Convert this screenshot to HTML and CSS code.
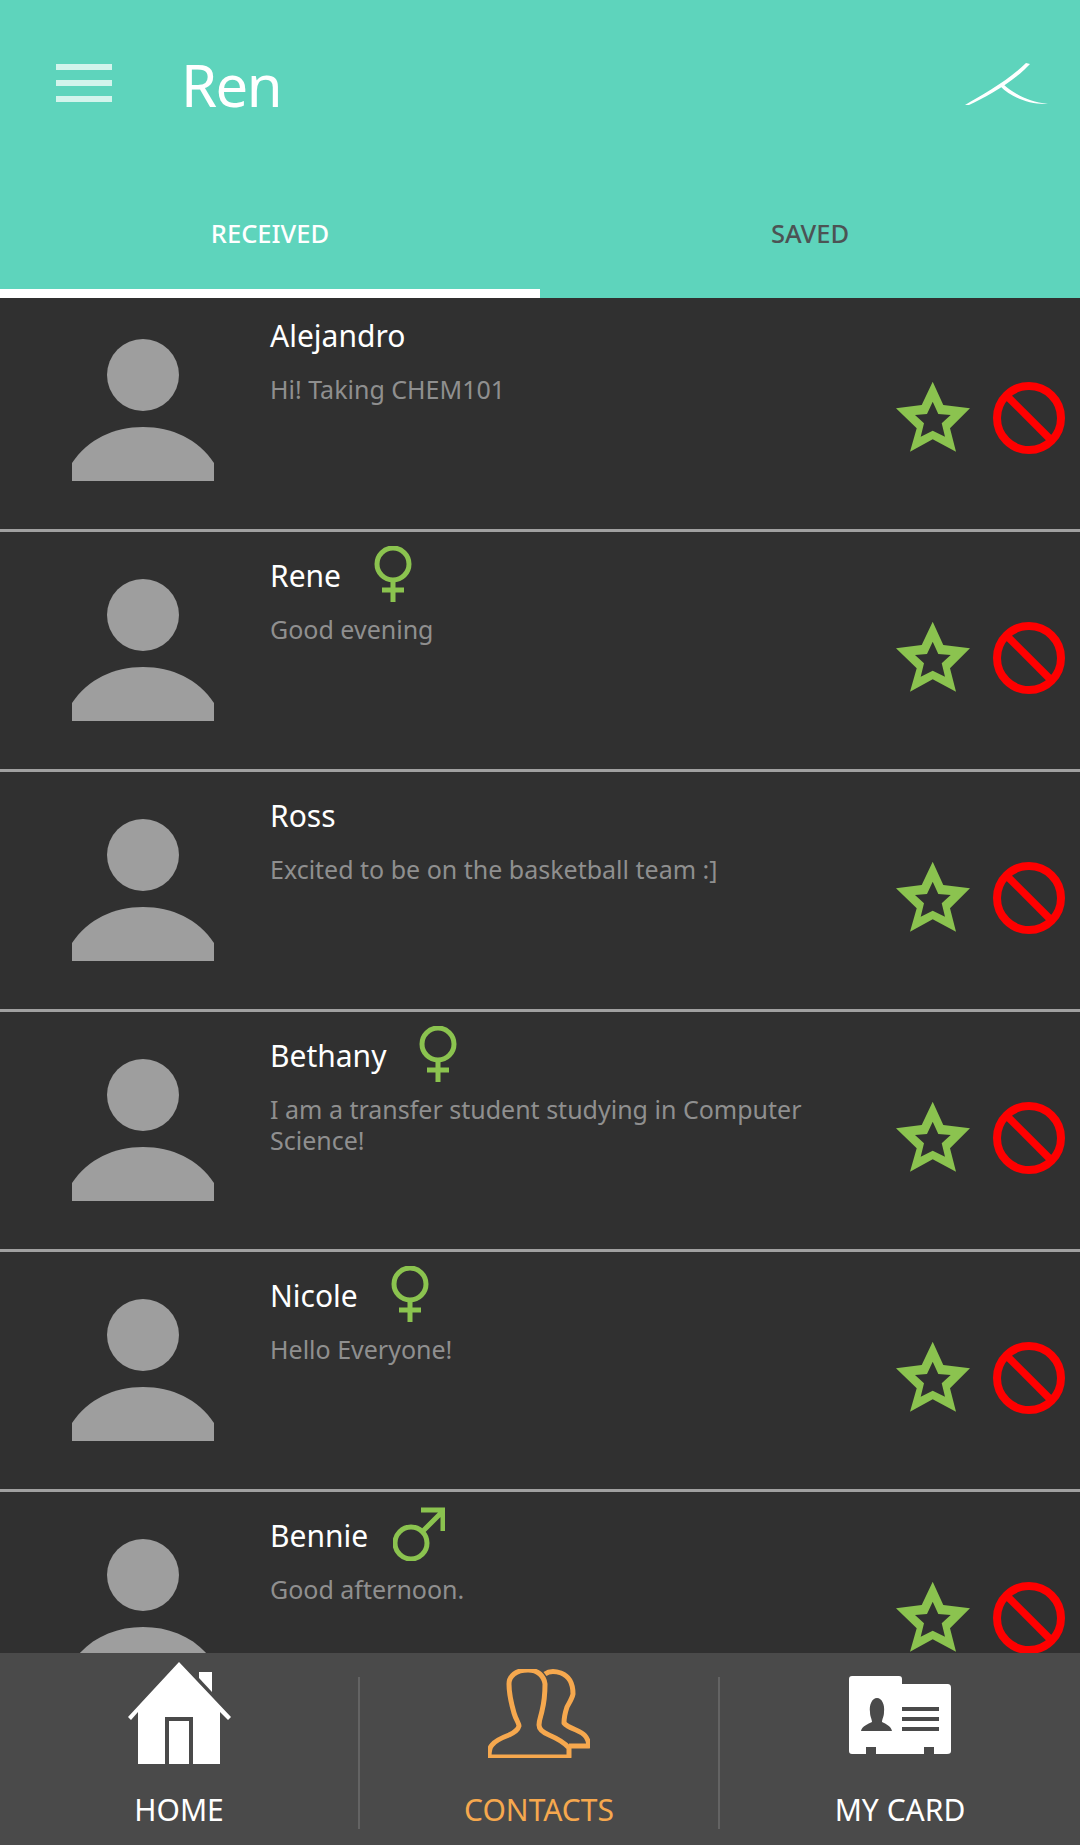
FILE: index.html
```html
<!DOCTYPE html>
<html lang="en">
<head>
    <meta charset="UTF-8">
    <meta name="viewport" content="width=device-width, initial-scale=1.0">
    <title>Ren</title>
    <link rel="stylesheet" href="styles.css">
</head>
<body>
    <svg class="defs" width="0" height="0">
        <symbol id="avatar" viewBox="0 0 142 142">
            <circle cx="71" cy="36" r="36"/>
            <path d="M0 142V124C16 100 42 88 71 88S126 100 142 124V142Z"/>
        </symbol>
        <symbol id="star" viewBox="0 0 76 72">
            <path fill-rule="evenodd" fill="#8bc34f" d="M37.700 0.700 48.300 24 75 27.300 55 47.300 61 70.700 37.700 58.300 15 70.700 21.700 47.300 1 27.300 26.700 24ZM37.700 20.700 32 33 20 34 29 42.300 25.700 55.700 37.700 49.700 50 55.700 46.700 42.300 55.700 34 43.300 33Z"/>
        </symbol>
        <symbol id="block" viewBox="0 0 74 74">
            <circle cx="37" cy="37" r="32" fill="none" stroke="#ff0000" stroke-width="8"/>
            <path d="M14 14 60 60" stroke="#ff0000" stroke-width="7.500"/>
        </symbol>
        <symbol id="female" viewBox="0 0 40 56">
            <circle cx="20" cy="18" r="16" fill="none" stroke="#8bc34f" stroke-width="5"/>
            <path d="M20 34V56M9 44H31" fill="none" stroke="#8bc34f" stroke-width="5"/>
        </symbol>
        <symbol id="male" viewBox="0 0 52 54">
            <circle cx="18" cy="36" r="16" fill="none" stroke="#8bc34f" stroke-width="5"/>
            <path d="M29 25 49 5M28 3H50V24" fill="none" stroke="#8bc34f" stroke-width="5"/>
        </symbol>
    </svg>

    <header class="top">
        <div class="toolbar">
            <div class="menu-btn"><span></span><span></span><span></span></div>
            <h1 class="title">Ren</h1>
            <svg class="brand" width="84" height="44" viewBox="0 0 84 44">
                <path d="M1 43C20 32 45 18 62 1L66 2 60 8C45 22 20 36 5 43Z" fill="#fff"/>
                <path d="M39 22C50 32 65 40 84 42 66 43 48 36 36 24Z" fill="#fff"/>
            </svg>
        </div>
        <div class="tabs">
            <div class="tab active">RECEIVED</div>
            <div class="tab">SAVED</div>
        </div>
    </header>

    <main class="contact-list">
        <div class="contact">
            <svg class="avatar"><use href="#avatar"/></svg>
            <div class="info">
                <div class="name-row"><span class="name">Alejandro</span></div>
                <p class="message">Hi! Taking CHEM101</p>
            </div>
            <div class="actions">
                <svg class="star"><use href="#star"/></svg>
                <svg class="block"><use href="#block"/></svg>
            </div>
        </div>
        <div class="contact">
            <svg class="avatar"><use href="#avatar"/></svg>
            <div class="info">
                <div class="name-row"><span class="name">Rene</span><svg class="female"><use href="#female"/></svg></div>
                <p class="message">Good evening</p>
            </div>
            <div class="actions">
                <svg class="star"><use href="#star"/></svg>
                <svg class="block"><use href="#block"/></svg>
            </div>
        </div>
        <div class="contact">
            <svg class="avatar"><use href="#avatar"/></svg>
            <div class="info">
                <div class="name-row"><span class="name">Ross</span></div>
                <p class="message">Excited to be on the basketball team :]</p>
            </div>
            <div class="actions">
                <svg class="star"><use href="#star"/></svg>
                <svg class="block"><use href="#block"/></svg>
            </div>
        </div>
        <div class="contact">
            <svg class="avatar"><use href="#avatar"/></svg>
            <div class="info">
                <div class="name-row"><span class="name">Bethany</span><svg class="female"><use href="#female"/></svg></div>
                <p class="message">I am a transfer student studying in Computer Science!</p>
            </div>
            <div class="actions">
                <svg class="star"><use href="#star"/></svg>
                <svg class="block"><use href="#block"/></svg>
            </div>
        </div>
        <div class="contact">
            <svg class="avatar"><use href="#avatar"/></svg>
            <div class="info">
                <div class="name-row"><span class="name">Nicole</span><svg class="female"><use href="#female"/></svg></div>
                <p class="message">Hello Everyone!</p>
            </div>
            <div class="actions">
                <svg class="star"><use href="#star"/></svg>
                <svg class="block"><use href="#block"/></svg>
            </div>
        </div>
        <div class="contact">
            <svg class="avatar"><use href="#avatar"/></svg>
            <div class="info">
                <div class="name-row"><span class="name">Bennie</span><svg class="male"><use href="#male"/></svg></div>
                <p class="message">Good afternoon.</p>
            </div>
            <div class="actions">
                <svg class="star"><use href="#star"/></svg>
                <svg class="block"><use href="#block"/></svg>
            </div>
        </div>
    </main>

    <nav class="bottom-nav">
        <div class="nav-item">
            <div class="nav-icon">
                <svg width="103" height="103" viewBox="0 0 103 103">
                    <path d="M71 10H84V30L71 16Z" fill="#fff"/>
                    <path d="M51 0 103 55 100 58 92 50V102H10V50L3 58 0 55Z" fill="#fff"/>
                    <path d="M39 102V57H63V102" fill="none" stroke="#4a4a4a" stroke-width="4"/>
                </svg>
            </div>
            <span class="nav-label">HOME</span>
        </div>
        <div class="nav-item current">
            <div class="nav-icon">
                <svg width="102" height="89" viewBox="0 0 102 89">
                    <g fill="none" stroke="#f6a84e" stroke-width="5" stroke-linejoin="round" transform="translate(1 1)">
                        <path d="M39 0C27 0 20 6 20 14 20 24 23 36 25 43 27 50 30 53 30 56 29 60 26 62 20 65 12 68 6 71 3 75 0 78 0 82 0 87H80V78C75 72 67 68 60 65 53 62 50 59 50 55 50 50 52 46 53 41 55 33 56 25 56 14 55 6 49 0 39 0Z"/>
                        <path d="M56 4C60 1 66 1 72 3 80 6 84 13 84 24 83 29 80 33 78 37 76 43 75 48 75 53 77 56 82 58 87 60 94 63 99 66 100 76H80"/>
                    </g>
                </svg>
            </div>
            <span class="nav-label">CONTACTS</span>
        </div>
        <div class="nav-item">
            <div class="nav-icon">
                <svg class="card-icon" width="102" height="78" viewBox="0 0 102 78">
                    <path d="M3 0H50C52 0 53 1 53 3V8H98C101 8 102 9 102 12V75C102 77 101 78 98 78H85V71H75V78H27V71H17V78H3C1 78 0 77 0 75V3C0 1 1 0 3 0Z" fill="#fff"/>
                    <path d="M12 55C13 50 19 48 23 46 23 43 21 41 21 36 20 29 23 22 28 22 33 22 36 29 35 36 35 41 33 43 33 46 37 48 42 50 43 55Z" fill="#4a4a4a"/>
                    <path d="M53 33H90M53 43H90M53 53H90" stroke="#4a4a4a" stroke-width="4"/>
                </svg>
            </div>
            <span class="nav-label">MY CARD</span>
        </div>
    </nav>
</body>
</html>
```
FILE: styles.css
```css
* {
    box-sizing: border-box;
}

html, body {
    height: 100%;
}

body {
    margin: 0;
    height: 1845px;
    display: flex;
    flex-direction: column;
    overflow: hidden;
    background: #303030;
    font-family: "Noto Sans", sans-serif;
    color: #ffffff;
}

.defs {
    display: none;
}

.top {
    position: relative;
    z-index: 1;
    height: 298px;
    flex: none;
    background: #5ed4bc;
}

.toolbar {
    height: 170px;
    display: flex;
    align-items: flex-start;
    padding: 64px 32px 0 56px;
}

.menu-btn {
    width: 56px;
    display: flex;
    flex-direction: column;
    gap: 10px;
}

.menu-btn span {
    display: block;
    height: 6px;
    background: #d3f4ec;
}

.title {
    margin: -19px 0 0 69px;
    font-size: 58px;
    line-height: 80px;
    font-weight: 400;
    letter-spacing: -1.500px;
}

.brand {
    margin: -2px 0 0 auto;
}

.tabs {
    height: 128px;
    display: flex;
}

.tab {
    flex: 1;
    height: 128px;
    padding-top: 43px;
    text-align: center;
    font-size: 25.500px;
    line-height: 40px;
    font-weight: 500;
    color: #4c5354;
}

.tab.active {
    color: #ffffff;
    border-bottom: 9px solid #ffffff;
}

.contact-list {
    flex: 1;
    min-height: 0;
    margin-top: -6px;
    overflow: hidden;
}

.contact {
    height: 240px;
    display: flex;
    align-items: flex-start;
    border-bottom: 3px solid #a0a0a0;
}

.avatar {
    flex: none;
    width: 142px;
    height: 142px;
    margin: 47px 0 0 72px;
    fill: #9e9e9e;
}

.info {
    flex: 1;
    margin: 23px 0 0 56px;
}

.name-row {
    height: 40px;
    display: flex;
    align-items: center;
    gap: 32px;
}

.name {
    margin-top: 2px;
    font-size: 30px;
    line-height: 42px;
}

.female {
    width: 40px;
    height: 56px;
    margin-top: -3px;
}

.male {
    width: 52px;
    height: 54px;
    margin: -3px 0 0 -7px;
}

.message {
    margin: 19px 0 0;
    width: 540px;
    font-size: 25px;
    line-height: 31px;
    color: #8f8f8f;
}

.actions {
    flex: none;
    display: flex;
    gap: 21px;
    margin: 89px 14px 0 0;
}

.star {
    width: 76px;
    height: 72px;
}

.block {
    width: 74px;
    height: 74px;
}

.bottom-nav {
    flex: none;
    height: 192px;
    padding: 24px 0 24px;
    display: grid;
    grid-template-columns: repeat(3, 1fr);
    background: #4a4a4a;
}

.nav-item {
    display: flex;
    flex-direction: column;
    align-items: center;
    border-right: 2px solid #636363;
}

.nav-item:last-child {
    border-right: 0;
}

.nav-icon {
    height: 102px;
    margin-top: -15px;
    display: flex;
    align-items: center;
    justify-content: center;
}

.card-icon {
    margin-top: 3px;
}

.nav-label {
    margin-top: 27px;
    font-size: 30px;
    line-height: 38px;
    color: #ffffff;
}

.nav-item.current .nav-label {
    color: #f6a84e;
}
```
